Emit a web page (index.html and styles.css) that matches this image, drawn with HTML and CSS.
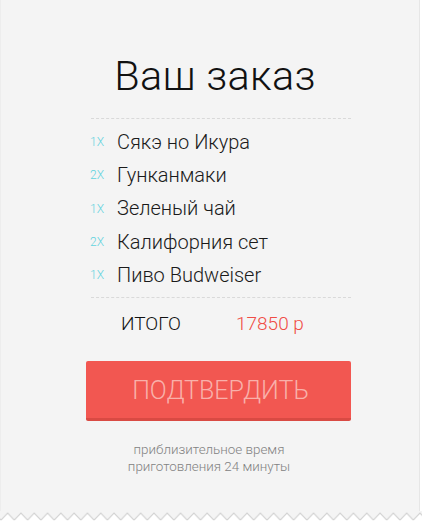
FILE: index.html
```html
<!DOCTYPE html>
<html lang="ru">
<head>
<meta charset="utf-8">
<link rel="stylesheet" href="styles.css">
</head>
<body>
<div class="receipt">
  <h1 class="title">Ваш заказ</h1>
  <ul class="items">
    <li class="item"><span class="qty">1X</span><span class="name">Сякэ но Икура</span></li>
    <li class="item"><span class="qty">2X</span><span class="name">Гунканмаки</span></li>
    <li class="item"><span class="qty">1X</span><span class="name">Зеленый чай</span></li>
    <li class="item"><span class="qty">2X</span><span class="name">Калифорния сет</span></li>
    <li class="item"><span class="qty">1X</span><span class="name">Пиво Budweiser</span></li>
  </ul>
  <div class="total">
    <span class="total-label">ИТОГО</span>
    <span class="total-sum">17850 р</span>
  </div>
  <button class="confirm">ПОДТВЕРДИТЬ</button>
  <p class="note">приблизительное время<br>приготовления 24 минуты</p>
</div>
<svg class="zigzag" width="422" height="12" viewBox="0 0 422 12">
  <defs>
    <pattern id="zz" width="13.3" height="12" patternUnits="userSpaceOnUse" x="1">
      <polygon points="0,0 13.3,0 13.3,9 6.65,2 0,9" fill="#f4f4f4"/>
      <polyline points="0,9 6.65,2 13.3,9" fill="none" stroke="#d2d2d2" stroke-width="1.2"/>
    </pattern>
  </defs>
  <rect x="0" y="0" width="422" height="12" fill="url(#zz)"/>
</svg>
</body>
</html>
```
FILE: styles.css
```css
html, body {
  margin: 0;
  padding: 0;
  background: #ffffff;
}
body {
  font-family: Roboto, "Noto Sans", sans-serif;
  width: 422px;
  height: 524px;
  overflow: hidden;
}
.receipt {
  background: #f4f4f4;
  width: 420px;
  height: 512px;
  box-sizing: border-box;
  border-left: 1px solid #ededed;
  border-right: 1px solid #e6e6e6;
  padding: 49px 0 0;
  display: flex;
  flex-direction: column;
  align-items: flex-start;
}
.title {
  align-self: center;
  margin: 0 0 0 10px;
  font-weight: 300;
  font-size: 41.5px;
  line-height: 54px;
  color: #111;
  letter-spacing: 0.3px;
}
.items {
  list-style: none;
  margin: 15px 0 0 90px;
  padding: 6px 0 6px;
  width: 260px;
  border-top: 1px dashed #d9d9d9;
  border-bottom: 1px dashed #d9d9d9;
  display: flex;
  flex-direction: column;
}
.item {
  display: flex;
  align-items: center;
  height: 33.3px;
}
.qty {
  width: 27px;
  font-size: 12px;
  color: #62d3de;
  font-weight: 300;
  margin-left: -1px;
  padding-top: 1px;
}
.name {
  font-size: 20px;
  font-weight: 300;
  color: #1a1a1a;
}
.total {
  width: 260px;
  display: flex;
  margin: 14px 0 0 90px;
  font-size: 19px;
  font-weight: 300;
  line-height: 24px;
}
.total-label {
  margin-left: 30px;
  width: 115px;
  color: #111;
}
.total-sum {
  color: #f04c45;
}
.confirm {
  margin: 25px 0 0 85px;
  width: 265px;
  height: 60px;
  border: none;
  border-bottom: 3px solid #d94a43;
  border-radius: 2px;
  background: #f25751;
  color: #f9b0aa;
  font-family: Roboto, "Noto Sans", sans-serif;
  font-size: 25px;
  font-weight: 300;
  padding: 2px 0 0 4px;
}
.note {
  align-self: center;
  margin: 20px 2px 0 0;
  text-align: center;
  font-size: 13.4px;
  line-height: 17px;
  color: #828282;
  font-weight: 300;
}
.zigzag {
  display: block;
  margin-top: -1px;
}
```
